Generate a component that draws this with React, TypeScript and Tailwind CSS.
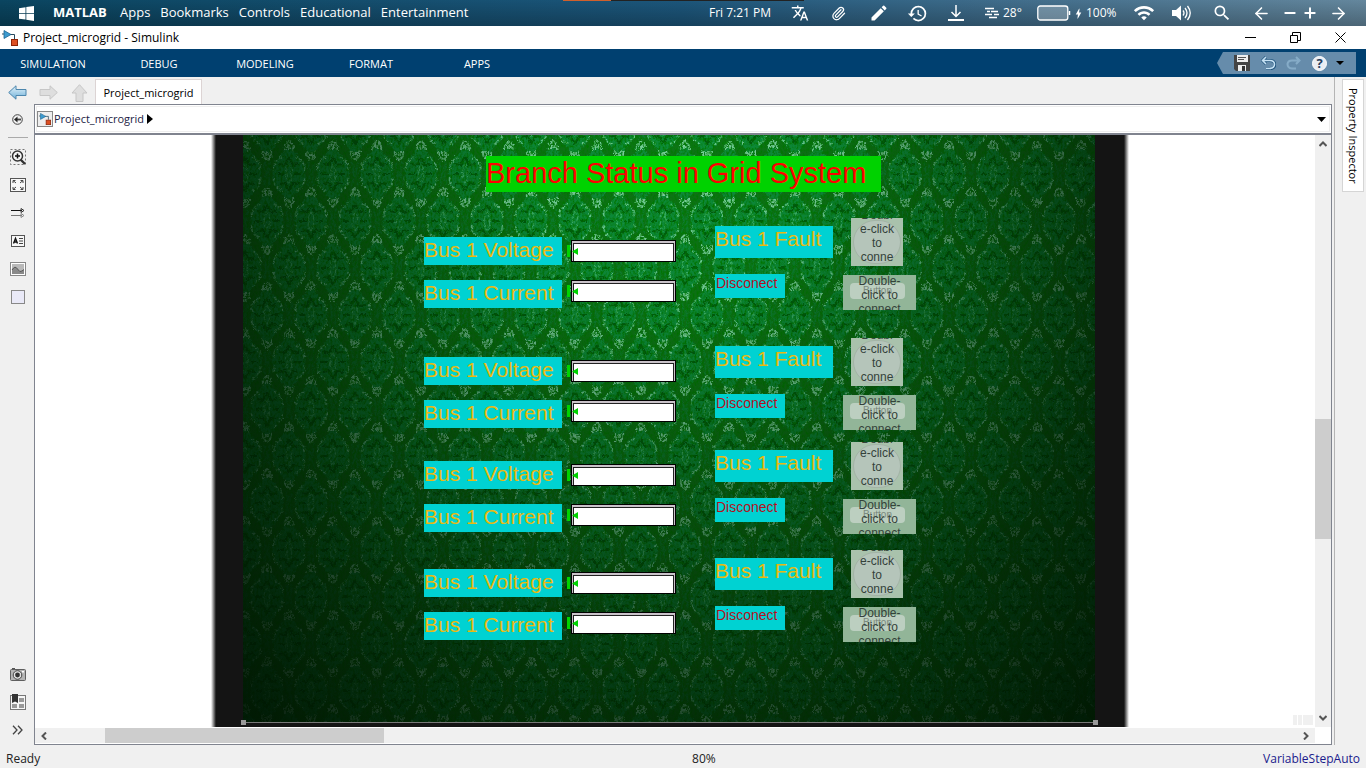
import React from "react";
import {
  MdTranslate, MdEdit, MdHistory, MdWifi, MdSearch, MdBolt,
} from "react-icons/md";
import { ArrowLeft, ArrowRight, Paperclip, Minus, Plus } from "lucide-react";

const menuItems = ["Apps", "Bookmarks", "Controls", "Educational", "Entertainment"];
const ribbonTabs = ["SIMULATION", "DEBUG", "MODELING", "FORMAT", "APPS"];

function ModelIcon({ className }: { className: string }) {
  return (
    <svg viewBox="0 0 16 16" className={className} aria-hidden="true">
      <path d="M0 4h2M8 4.500h4.500V9" stroke="#27485c" fill="none" />
      <path d="M2 0.500L9 4.500L2 8.500Z" fill="#3c9bd0" stroke="#1d6592" strokeWidth=".8" />
      <rect x="9.500" y="9.500" width="6" height="6" fill="#dd4f22" stroke="#8e2508" />
    </svg>
  );
}

function MenuBar() {
  return (
    <header className="relative flex h-[26px] shrink-0 items-center bg-linear-to-r from-[#0a4560] via-[#1c567b] via-50% to-[#64879d] text-[13px] text-white">
      <div className="absolute inset-0 bg-linear-to-b from-transparent to-black/25" />
      <div className="absolute top-0 left-[563px] flex h-px">
        <span className="w-12 bg-[#d0602c]" />
        <span className="w-[193px] bg-[#222]" />
      </div>
      <nav className="relative flex items-center">
        <button aria-label="Start" className="ml-[19px] w-[34px]">
          <svg viewBox="0 0 15 15" className="size-[15px]" fill="#fff">
            <path d="M0 2.200L6.500 1.200V7H0ZM7.300 1.100L15 0V7H7.300ZM0 7.800H6.500V13.600L0 12.700ZM7.300 7.800H15V15L7.300 13.800Z" />
          </svg>
        </button>
        <button className="w-[67px] text-left font-bold">MATLAB</button>
        <div className="flex gap-2.5">
          {menuItems.map((m) => (
            <button key={m}>{m}</button>
          ))}
        </div>
      </nav>
      <div className="relative ml-auto flex items-center">
        <span className="w-[82px] text-[12px]">Fri 7:21 PM</span>
        <button aria-label="Translate" className="w-10"><MdTranslate size={18} /></button>
        <button aria-label="Attachments" className="w-[38px]">
          <Paperclip size={15} strokeWidth={2} />
        </button>
        <button aria-label="Edit" className="w-[38px]"><MdEdit size={20} /></button>
        <button aria-label="History" className="w-[41px]"><MdHistory size={21} /></button>
        <button aria-label="Downloads" className="w-[37px]">
          <svg viewBox="0 0 16 16" className="size-4" fill="none" stroke="#fff" strokeWidth="1.500">
            <path d="M8 0V11M3.500 7L8 11.500L12.500 7" />
            <path d="M0 15H16" strokeWidth="2" />
          </svg>
        </button>
        <svg viewBox="0 0 14 12" className="w-[14px]" stroke="#fff" strokeWidth="1.500" aria-hidden="true">
          <path d="M0 1.500H9M2 4.500H5M6 4.500H13M0 7.500H7M9 7.500H14M4 10.500H12" />
        </svg>
        <span className="ml-1 w-[34px] text-[12px]">28°</span>
        <svg viewBox="0 0 34 16" className="w-[34px]" aria-hidden="true">
          <rect x=".8" y="1" width="30" height="14" rx="2.500" fill="#ffffff40" stroke="#fff" strokeWidth="1.300" />
          <path d="M32.500 6V10" stroke="#fff" strokeWidth="1.500" />
        </svg>
        <MdBolt size={13} className="ml-px" />
        <span className="w-12 pl-px text-[12px]">100%</span>
        <button aria-label="Wi-Fi" className="w-[39px]"><MdWifi size={22} /></button>
        <button aria-label="Volume" className="w-10">
          <svg viewBox="0 0 20 16" className="w-5" fill="none" stroke="#fff" strokeWidth="1.300">
            <path d="M0 5H4L9 .5V15.500L4 11H0Z" fill="#fff" stroke="none" />
            <path d="M11 5.500Q13 8 11 10.500M13 3Q17 8 13 13M15.500 1Q21 8 15.500 15" />
          </svg>
        </button>
        <button aria-label="Search" className="w-[40px]"><MdSearch size={20} /></button>
        <button aria-label="Back" className="w-[30px]"><ArrowLeft size={19} strokeWidth={2} /></button>
        <button aria-label="Less" className="w-5"><Minus size={16} strokeWidth={3} /></button>
        <button aria-label="More" className="w-[27px]"><Plus size={16} strokeWidth={3} /></button>
        <button aria-label="Forward" className="w-[37px]"><ArrowRight size={19} strokeWidth={2} /></button>
      </div>
    </header>
  );
}

function TitleBar() {
  return (
    <div className="flex h-[23px] shrink-0 items-center bg-white text-[12px] text-black">
      <ModelIcon className="ml-[2px] size-4" />
      <h1 className="ml-[5px]">Project_microgrid - Simulink</h1>
      <div className="ml-auto flex items-center">
        <button aria-label="Minimize" className="w-[45px]">
          <svg viewBox="0 0 11 11" className="size-[11px]"><path d="M0 5.500H11" stroke="#000" /></svg>
        </button>
        <button aria-label="Restore" className="w-[45px]">
          <svg viewBox="0 0 11 11" className="size-[11px]" fill="none" stroke="#000">
            <path d="M.5 3.500H7.500V10.500H.5ZM2.500 3V.5H10.500V8.500H8" />
          </svg>
        </button>
        <button aria-label="Close" className="w-[31px]">
          <svg viewBox="0 0 11 11" className="size-[11px]" stroke="#000"><path d="M.5 .5L10.500 10.500M10.500 .5L.5 10.500" /></svg>
        </button>
      </div>
    </div>
  );
}

function Ribbon() {
  return (
    <div className="flex h-7 shrink-0 items-center bg-[#004070] text-[11px] text-white">
      {ribbonTabs.map((t) => (
        <button key={t} className="w-[106px] pt-0.5 text-center">{t}</button>
      ))}
      <div className="mr-[10px] ml-auto flex h-[22px] w-[139px] items-center bg-[#668cab] pl-[17px] [clip-path:polygon(6px_0,100%_0,100%_100%,6px_100%,0_50%)]">
        <button aria-label="Save" className="w-[27px]">
          <svg viewBox="0 0 16 16" className="size-4">
            <path d="M0 0H16V16H2L0 14Z" fill="#444" />
            <rect x="3" y="0" width="11" height="7" fill="#eee" />
            <path d="M4 2.500H12M4 4.500H10" stroke="#555" />
            <rect x="4" y="10" width="8" height="6" fill="#eee" />
            <rect x="8" y="11" width="3" height="5" fill="#333" />
          </svg>
        </button>
        <button aria-label="Undo" className="w-[25px]">
          <svg viewBox="0 0 15 14" className="w-[15px]" fill="none">
            <path d="M5 13H9Q14 12 14 8Q13 4.500 9 4.500H2M5 1L1.500 4.500L5 8" stroke="#24577f" strokeWidth="3" />
            <path d="M5 12.500H9Q13.500 12 13.500 8Q13 4.500 9 4.500H2M5 1L1.500 4.500L5 8" stroke="#c5e1f4" strokeWidth="1.600" />
          </svg>
        </button>
        <button aria-label="Redo" className="w-[26px]" disabled>
          <svg viewBox="0 0 15 14" className="w-[15px]" fill="none" opacity=".55">
            <path d="M10 12.500H6Q1.500 12 1.500 8Q2 4.500 6 4.500H13M10 1L13.500 4.500L10 8" stroke="#9fc6df" strokeWidth="2" />
          </svg>
        </button>
        <button aria-label="Help" className="flex size-[15px] items-center justify-center rounded-full border border-white bg-[#e9edf2] text-[13px] leading-none font-bold text-[#243c5c]">?</button>
        <button aria-label="More actions" className="ml-[9px]">
          <svg viewBox="0 0 8 4" className="w-2"><path d="M0 0H8L4 4Z" /></svg>
        </button>
      </div>
    </div>
  );
}

function TabRow() {
  return (
    <div className="flex h-[27px] shrink-0 items-end">
      <div className="flex h-full items-center pt-1 pl-2">
        <button aria-label="Back" className="w-[31px]">
          <svg viewBox="0 0 19 15" className="w-[19px]">
            <defs><linearGradient id="bk" x2="0" y2="1"><stop stopColor="#e3f3fb" /><stop offset="1" stopColor="#6fb0d8" /></linearGradient></defs>
            <path d="M.7 7.500L8 .8V4.500H18V10.500H8V14.200Z" fill="url(#bk)" stroke="#4c86ad" />
          </svg>
        </button>
        <button aria-label="Forward" className="w-8" disabled>
          <svg viewBox="0 0 19 15" className="w-[19px]"><path d="M18.300 7.500L11 .8V4.500H1V10.500H11V14.200Z" fill="#dedede" stroke="#c6c6c6" /></svg>
        </button>
        <button aria-label="Up to parent" className="w-6" disabled>
          <svg viewBox="0 0 17 18" className="w-[17px]"><path d="M8.500 .7L16 9H12V17.500H5V9H1Z" fill="#dedede" stroke="#c6c6c6" /></svg>
        </button>
      </div>
      <button className="flex h-[25px] w-[107px] items-center justify-center border border-b-0 border-[#dcd4d4] bg-white pt-0.5 text-[11px] text-black">
        Project_microgrid
      </button>
    </div>
  );
}

function Sidebar() {
  return (
    <aside className="flex w-[34px] shrink-0 flex-col items-center pl-px text-[#333]">
      <button aria-label="Hide browser" className="mt-[9px] h-3">
        <svg viewBox="0 0 11 11" className="size-[11px]" fill="none" stroke="#444">
          <circle cx="5.500" cy="5.500" r="4.800" /><path d="M9 5.500H4" strokeWidth="1.800" /><path d="M5.500 2.500L2 5.500L5.500 8.500Z" fill="#222" stroke="none" />
        </svg>
      </button>
      <div className="mt-3 h-px w-5 bg-[#aaa]" />
      <button aria-label="Zoom" className="mt-[5px] h-7">
        <svg viewBox="0 0 16 16" className="size-4" fill="none">
          <rect x=".5" y=".5" width="15" height="15" stroke="#777" strokeDasharray="2 2" />
          <path d="M10.500 10.500L15 15" stroke="#333" strokeWidth="2.400" />
          <circle cx="7.500" cy="7" r="5" fill="#f6f6f6" stroke="#333" strokeWidth="1.500" />
          <path d="M5 7H10M7.500 4.500V9.500" stroke="#111" strokeWidth="1.500" />
        </svg>
      </button>
      <button aria-label="Fit to view" className="h-7">
        <svg viewBox="0 0 16 14" className="w-4" fill="none">
          <rect x=".5" y=".5" width="15" height="13" fill="#f8f8f8" stroke="#555" />
          <path d="M3 5V2.500H5.500M3 2.500L6 5M10.500 2.500H13V5M13 2.500L10 5M3 9V11.500H5.500M3 11.500L6 9M10.500 11.500H13V9M13 11.500L10 9" stroke="#444" />
        </svg>
      </button>
      <button aria-label="Signals" className="h-7">
        <svg viewBox="0 0 16 10" className="w-4" fill="none">
          <path d="M1 2.500H12" stroke="#111" /><path d="M11 .5L14 2.500L11 4.500Z" stroke="#333" />
          <path d="M1 7.500H12" stroke="#777" /><path d="M11 5.500L14 7.500L11 9.500Z" stroke="#888" />
        </svg>
      </button>
      <button aria-label="Annotation" className="h-7">
        <svg viewBox="0 0 14 12" className="w-[14px]" fill="none">
          <rect x=".5" y=".5" width="13" height="11" fill="#f8f8f8" stroke="#555" />
          <path d="M2.500 8.500L4.500 3.500L6.500 8.500M3.300 7H5.700" stroke="#111" strokeWidth="1.400" />
          <path d="M8 3.500H12M8 6H12M8 8.500H12" stroke="#444" />
        </svg>
      </button>
      <button aria-label="Image" className="h-7">
        <svg viewBox="0 0 16 14" className="w-4">
          <rect x=".5" y=".5" width="15" height="13" fill="#fff" stroke="#888" />
          <rect x="2" y="2" width="12" height="10" fill="#b9b9b9" />
          <path d="M2 8Q5 3 7.500 7T12 9L14 7.500V12H2Z" fill="#8a8a8a" />
          <path d="M2 8Q5 3 7.500 7T12 9L14 7.500" fill="none" stroke="#555" />
        </svg>
      </button>
      <button aria-label="Area" className="h-7">
        <svg viewBox="0 0 14 14" className="w-[14px]"><rect x=".5" y=".5" width="13" height="13" fill="#e9e9f7" stroke="#888" /></svg>
      </button>
      <button aria-label="Screenshot" className="mt-auto h-7">
        <svg viewBox="0 0 16 13" className="w-4">
          <path d="M2 0H5V1H2Z" fill="#555" />
          <rect x=".5" y="1.500" width="15" height="11" rx="1" fill="#b5b5b5" stroke="#5f5f5f" />
          <circle cx="7.500" cy="7" r="4.300" fill="#e4e4e4" stroke="#444" />
          <circle cx="7.500" cy="7" r="2.400" fill="#333" />
          <rect x="12" y="3" width="2" height="1.500" fill="#fff" />
        </svg>
      </button>
      <button aria-label="Viewmarks" className="h-7">
        <svg viewBox="0 0 16 16" className="size-4">
          <rect x=".5" y="1.500" width="15" height="14" fill="#f6f6f6" stroke="#777" />
          <path d="M2 0H8V9L5 7.500L2 9Z" fill="#333" />
          <path d="M9 4H14V8H9ZM9 10H14V14H9ZM2 10H7V14H2Z" fill="#999" />
        </svg>
      </button>
      <button aria-label="More tools" className="mb-px h-7">
        <svg viewBox="0 0 11 10" className="w-[11px]" fill="none" stroke="#444" strokeWidth="1.300"><path d="M1 .7L5 5L1 9.300M6 .7L10 5L6 9.300" /></svg>
      </button>
    </aside>
  );
}

function Medallion({ x, y }: { x: number; y: number }) {
  return (
    <g transform={`translate(${x} ${y})`}>
      <path d="M0-30Q5-22 12-15Q18-8 16 0Q18 8 12 15Q5 22 0 30Q-5 22-12 15Q-18 8-16 0Q-18-8-12-15Q-5-22 0-30Z" fill="#0e9444" fillOpacity=".8" />
      <path d="M-19-12L-21 0L-19 12M19-12L21 0L19 12" fill="none" stroke="#0a8230" strokeWidth="2" />
      <g fill="none" stroke="#6ccf94" strokeWidth="1.800" strokeDasharray="3 1.500">
        <path d="M-7-17Q-17-12-15-3M7-17Q17-12 15-3M-7 17Q-17 12-15 3M7 17Q17 12 15 3" />
      </g>
      <g fill="none" stroke="#04600d" strokeWidth="2.200">
        <path d="M0-17L-4-9L-10-10M0-17L4-9L10-10M0 17L-4 9L-10 10M0 17L4 9L10 10M-12 0H-5M12 0H5" />
      </g>
      <g fill="none" stroke="#3cb56a" strokeWidth="1.200">
        <path d="M0-9Q4-5 2 0Q4 5 0 9Q-4 5-2 0Q-4-5 0-9Z" />
      </g>
      <g fill="none" stroke="#78d39c" strokeWidth="2">
        <path d="M-4-24Q-5-30 0-33Q5-30 4-24M-1-25V-29M1-25V-29M-4 24Q-5 30 0 33Q5 30 4 24M-1 25V29M1 25V29" />
      </g>
    </g>
  );
}

function Wallpaper() {
  return (
    <svg viewBox="0 0 852 587" className="block h-full w-full" aria-hidden="true">
      <defs>
        <pattern id="damask" width="44" height="94" patternUnits="userSpaceOnUse" x="2" y="-8">
          <rect width="44" height="94" fill="#077618" />
          <Medallion x={0} y={47} />
          <Medallion x={44} y={47} />
          <Medallion x={22} y={0} />
          <Medallion x={22} y={94} />
        </pattern>
        <filter id="weave" x="0" y="0" width="100%" height="100%">
          <feTurbulence type="fractalNoise" baseFrequency="0.45" numOctaves="2" seed="4" result="n" />
          <feDisplacementMap in="SourceGraphic" in2="n" scale="5" xChannelSelector="R" yChannelSelector="G" />
          <feGaussianBlur stdDeviation=".6" />
        </filter>
        <filter id="grain" x="0" y="0" width="100%" height="100%">
          <feTurbulence type="fractalNoise" baseFrequency="0.5 0.3" numOctaves="3" seed="9" />
          <feColorMatrix values="0 0 0 0 0  0 0 0 0 .2  0 0 0 0 0  2.600 0 0 0 -1.050" />
        </filter>
        <radialGradient id="light" gradientUnits="userSpaceOnUse" cx="0" cy="0" r="1" gradientTransform="translate(430 -30) scale(620 820)">
          <stop offset="0" stopColor="#001002" stopOpacity="0" />
          <stop offset=".25" stopColor="#001002" stopOpacity=".08" />
          <stop offset=".5" stopColor="#001002" stopOpacity=".4" />
          <stop offset=".75" stopColor="#001002" stopOpacity=".7" />
          <stop offset="1" stopColor="#001002" stopOpacity=".9" />
        </radialGradient>
      </defs>
      <rect width="852" height="587" fill="#077618" />
      <rect width="852" height="587" fill="url(#damask)" filter="url(#weave)" />
      <rect width="852" height="587" filter="url(#grain)" />
      <rect width="852" height="587" fill="url(#light)" />
    </svg>
  );
}

function Display({ name, top }: { name: string; top: string }) {
  return (
    <div className={`absolute left-[143px] flex items-center gap-px ${top}`}>
      <span className="h-3 w-[3px] bg-[#00d200]" />
      <output aria-label={name} className="relative h-[22px] w-[105px] border border-black bg-[#c9c2c9] px-px pt-[2px]">
        <span className="block h-full border border-b-0 border-[#222] bg-white" />
        <svg viewBox="0 0 6 7" className="absolute top-[7px] left-0 w-[6px]"><path d="M6 0V7L0 3.500Z" fill="#00d200" /></svg>
      </output>
    </div>
  );
}

function BusGroup({ top }: { top: string }) {
  return (
    <section className={`absolute left-[389px] ${top}`}>
      <p className="absolute top-[19px] left-0 h-7 w-[138px] bg-[#00d2d2] text-[21px] leading-[25px] whitespace-nowrap text-[#ebb910]">Bus 1 Voltage</p>
      <p className="absolute top-[62px] left-0 h-7 w-[138px] bg-[#00d2d2] text-[21px] leading-[25px] whitespace-nowrap text-[#ebb910]">Bus 1 Current</p>
      <Display name="Bus voltage" top="top-[22px]" />
      <Display name="Bus current" top="top-[62px]" />
      <p className="absolute top-2 left-[291px] h-8 w-[118px] bg-[#00d2d2] text-[21px] leading-[25px] whitespace-nowrap text-[#ebb910]">Bus 1 Fault</p>
      <p className="absolute top-14 left-[291px] h-6 w-[70px] bg-[#00d2d2] pl-px text-[14px] leading-[18px] text-[#b4101c]">Disconect</p>
      <button className="absolute top-0 left-[427px] flex h-12 w-[52px] items-center justify-center overflow-hidden bg-[#a9c2ac] text-center text-[12px] leading-[14px] text-[#34423a]">
        <span className="absolute inset-[2px] rounded-full border border-[#a3b3a6] bg-[#b5c5ba]" />
        <span className="relative pb-3">Doubl<br />e-click<br />to<br />conne</span>
      </button>
      <div className="absolute top-[57px] left-[419px] flex h-[35px] w-[73px] overflow-hidden bg-[#92b598]">
        <button className="mt-2 ml-[7px] h-4 w-[55px] rounded-[4px] bg-[#bccfc0] text-[10px] leading-[14px] text-[#7b8a7e]">Button</button>
        <span className="absolute -top-px left-0 w-full text-center text-[12px] leading-[14px] text-[#34423a]">Double-<br />click to<br />connect</span>
      </div>
    </section>
  );
}

function Canvas() {
  return (
    <div className="relative min-w-0 flex-1 overflow-hidden bg-white font-['Liberation_Sans',Arial,sans-serif]">
      <div className="absolute inset-y-0 left-[176px] w-[918px] bg-[linear-gradient(90deg,#fff,#141414_5px,#141414_calc(100%-5px),#fff)]" />
      <div className="absolute top-0 left-[208px] h-[587px] w-[852px]"><Wallpaper /></div>
      <div className="absolute top-[587px] left-[208px] h-px w-[853px] bg-[#777]" />
      <div className="absolute top-[585px] left-[206px] size-[5px] bg-[#999]" />
      <div className="absolute top-[585px] left-[1058px] size-[5px] bg-[#999]" />
      <h2 className="absolute top-[21px] left-[451px] h-9 w-[395px] bg-[#00d200] text-[29px] leading-[35px] whitespace-nowrap text-[#ff0000]">Branch Status in Grid System</h2>
      <BusGroup top="top-[83px]" />
      <BusGroup top="top-[203px]" />
      <BusGroup top="top-[307px]" />
      <BusGroup top="top-[415px]" />
      <div className="absolute right-[2px] bottom-[2px] flex h-[10px] gap-px">
        <span className="w-1 bg-[#f0f0f0]" /><span className="w-1 bg-[#f0f0f0]" /><span className="w-[10px] bg-[#f0f0f0]" />
      </div>
    </div>
  );
}

function Editor() {
  return (
    <main className="flex min-w-0 flex-1 flex-col border border-[#80848f] bg-white">
      <div className="flex h-[30px] shrink-0 items-center border-b-2 border-[#80848f]">
        <div className="m-px flex h-[26px] flex-1 items-center border border-[#eee] text-[11px] text-black">
          <span className="flex size-4 items-center justify-center border border-[#888] bg-[#eee]"><ModelIcon className="size-3" /></span>
          <a href="#model" className="ml-px text-[#222244]">Project_microgrid</a>
          <svg viewBox="0 0 6 10" className="ml-[3px] h-[10px]"><path d="M0 0L6 5L0 10Z" /></svg>
          <button aria-label="Show path history" className="mr-[3px] ml-auto">
            <svg viewBox="0 0 9 5" className="w-[9px]"><path d="M0 0H9L4.500 5Z" /></svg>
          </button>
        </div>
      </div>
      <div className="flex min-h-0 flex-1">
        <Canvas />
        <div className="relative flex w-4 shrink-0 flex-col items-center justify-between bg-[#f0f0f0] py-1.5">
          <svg viewBox="0 0 8 6" className="w-2" fill="none" stroke="#555" strokeWidth="2"><path d="M.5 5L4 1.500L7.500 5" /></svg>
          <div className="absolute top-[284px] h-[120px] w-full bg-[#cdcdcd]" />
          <svg viewBox="0 0 8 6" className="w-2" fill="none" stroke="#555" strokeWidth="2"><path d="M.5 1L4 4.500L7.500 1" /></svg>
        </div>
      </div>
      <div className="mt-px mr-4 mb-px flex h-[15px] shrink-0 items-center bg-[#f0f0f0] px-[6px]">
        <svg viewBox="0 0 6 8" className="h-2" fill="none" stroke="#555" strokeWidth="2"><path d="M5 .5L1.500 4L5 7.500" /></svg>
        <div className="ml-[58px] h-full w-[279px] bg-[#cdcdcd]" />
        <svg viewBox="0 0 6 8" className="ml-auto h-2" fill="none" stroke="#555" strokeWidth="2"><path d="M1 .5L4.500 4L1 7.500" /></svg>
      </div>
    </main>
  );
}

export default function App() {
  return (
    <div className="flex h-screen flex-col overflow-hidden bg-[#f0f0f0] font-['Open_Sans','Noto_Sans',sans-serif]">
      <MenuBar />
      <TitleBar />
      <Ribbon />
      <div className="flex min-h-0 flex-1">
        <div className="flex min-w-0 flex-1 flex-col">
          <TabRow />
          <div className="flex min-h-0 flex-1">
            <Sidebar />
            <Editor />
          </div>
        </div>
        <div className="ml-[2px] w-8 shrink-0 border-l border-[#b4b4b4] pt-[2px] pl-[7px]">
          <button className="flex h-[113px] w-[22px] items-center justify-center border border-[#d5d5d5] bg-white text-[11px] text-black [writing-mode:vertical-rl]">
            Property Inspector
          </button>
        </div>
      </div>
      <footer className="grid h-[23px] shrink-0 grid-cols-3 items-center px-[6px] pt-1 text-[12px] text-[#222]">
        <span>Ready</span>
        <span className="pl-[52%] whitespace-nowrap">80%</span>
        <a href="#solver" className="justify-self-end text-[#1a1a8c]">VariableStepAuto</a>
      </footer>
    </div>
  );
}
